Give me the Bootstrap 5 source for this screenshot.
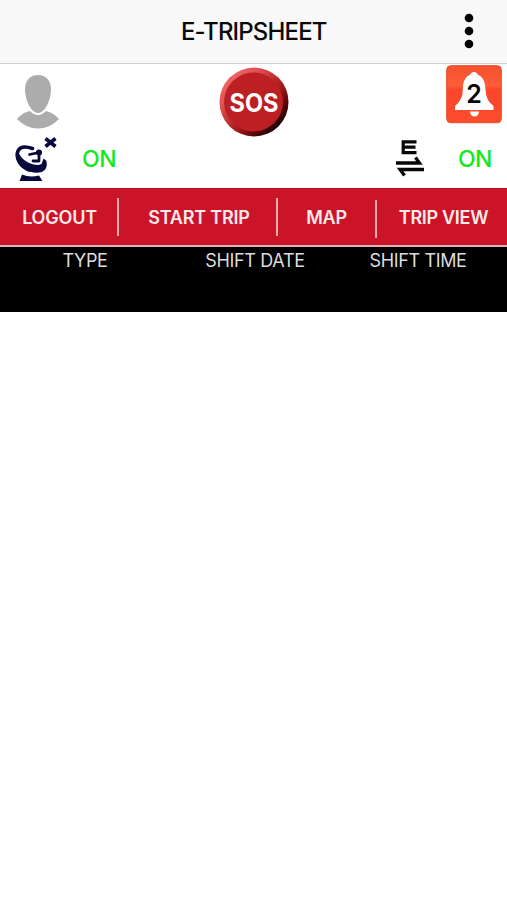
<!DOCTYPE html>
<html lang="en">
<head>
<meta charset="utf-8">
<meta name="viewport" content="width=device-width, initial-scale=1">
<title>E-Tripsheet</title>
<link href="https://cdn.jsdelivr.net/npm/bootstrap@5.3.0/dist/css/bootstrap.min.css" rel="stylesheet">
<style>
body{font-family:Inter,"Liberation Sans",sans-serif;color:#0a0a0a;overflow-x:hidden}
svg{display:block;flex:none}
.topbar{height:64px;background:#f8f8f8;border-bottom:1px solid #cfcfcf;padding:0 32px 2px 0}
.title{font-size:24px;font-weight:500;letter-spacing:-.85px;line-height:1;margin:3px 0 0 181px}
.status-top{height:73px;padding:1px 5px 0 17px}
.sos{margin-left:2px}
.status-low{height:51px;padding:0 15px 0 15px}
.state-on{color:#12ea20;font-size:23px;font-weight:500;letter-spacing:-.5px;line-height:1;margin-top:11px}
.gap-sat{margin-left:24px}
.gap-swap{margin-right:32px}
.actions{height:59px;background:#cb1428;border-top:1px solid #b30f22;border-bottom:2px solid #d9b5b8}
.act{color:#ffe9ea;font-size:18px;font-weight:600;letter-spacing:-.2px;line-height:1;background:none;border:0;padding:2px 0 0}
.act-logout{width:117px;padding-left:2px}
.act-start{width:157px;padding-left:3px}
.act-map{width:97px}
.act-view{padding-right:1px;letter-spacing:-.3px}
.bar-line{width:2px;height:38px;background:#eda9b0}
.heads{height:65px;background:#000;color:#dcdcdc;font-size:18px;letter-spacing:-.35px;line-height:1;padding-top:5px}
.h-type{width:170px}.h-date{width:170px}.h-time{width:156px}
</style>
</head>
<body class="bg-white">
<header class="topbar d-flex align-items-center justify-content-between">
  <h1 class="title mb-0">E-TRIPSHEET</h1>
  <svg width="12" height="38" viewBox="0 0 12 38"><g fill="#000"><circle cx="6" cy="6" r="4.3"/><circle cx="6" cy="19" r="4.3"/><circle cx="6" cy="32" r="4.3"/></g></svg>
</header>
<main>
  <section class="status-top d-flex justify-content-between align-items-start">
    <svg width="43" height="65" viewBox="0 0 43 65"><g fill="#acacac"><path d="M21 10C13 10 8 16 8 24C8 35 14 48 21 48C28 48 34 35 34 24C34 16 29 10 21 10Z"/><path d="M0 54Q6 47 13 46Q17 50 21 50Q25 50 29 46Q37 48 42 54Q33 63.500 21 63.500Q9 63.500 0 54Z"/></g></svg>
    <svg class="sos" width="74" height="74" viewBox="0 0 74 74">
      <defs><linearGradient id="rim" x1=".12" y1=".12" x2=".87" y2=".87"><stop offset="0" stop-color="#ee6a6c"/><stop offset=".3" stop-color="#d8484b"/><stop offset=".6" stop-color="#a81c1e"/><stop offset=".82" stop-color="#5c0707"/><stop offset="1" stop-color="#100"/></linearGradient></defs>
      <circle cx="37" cy="37" r="34.500" fill="url(#rim)"/><circle cx="36.500" cy="37" r="29.500" fill="#bd2022"/>
      <text x="37" y="46.500" text-anchor="middle" textLength="49" lengthAdjust="spacingAndGlyphs" font-size="25" font-weight="700" fill="#fff">SOS</text>
    </svg>
    <svg width="56" height="59" viewBox="0 0 56 59">
      <defs><linearGradient id="tile" x1="0" y1="0" x2="0" y2="1"><stop offset="0" stop-color="#f4522f"/><stop offset=".35" stop-color="#ff5c3a"/><stop offset=".42" stop-color="#fb4729"/><stop offset="1" stop-color="#fc4b2d"/></linearGradient></defs>
      <rect x=".7" y=".7" width="54.600" height="57" rx="4" fill="url(#tile)" stroke="#e94929"/>
      <path d="M24.500 9.500Q25 7 28 7Q31 7 31.500 9.500Q38 12 39 20L40 29Q41 36 47.500 41V45H9V41Q15 36 16.500 29L17 20Q18 12 24.500 9.500Z" fill="#fff"/><path d="M24 46.500H33Q32.500 51.500 28.500 51.500Q24.500 51.500 24 46.500Z" fill="#fff"/>
      <text x="28" y="38" text-anchor="middle" font-size="25" font-weight="600" fill="#080808">2</text>
    </svg>
  </section>
  <section class="status-low d-flex align-items-start">
    <svg width="43" height="45" viewBox="0 0 43 45">
      <g fill="none" stroke="#08083d"><path d="M30.500 1.500L40.500 9.500M40.500 1.500L30.500 9.500" stroke-width="3.600"/><path d="M17.500 11.500Q6 7.500 3 14C0 22 6 30 14 33" stroke-width="3.600" stroke-linecap="round"/><path d="M14.500 17.500L24 15.500V23M18 24H24" stroke-width="2.800" stroke-linecap="round" stroke-linejoin="round"/></g>
      <path d="M2 13Q6 22 13 25.500Q21 29.500 26.500 27L28.500 21.500L31.500 24Q33 32 27 35Q18 37.500 9 31.500Q1 25 2 13Z" fill="#08083d"/><circle cx="24" cy="15.500" r="3" fill="#08083d"/><path d="M7 37.500Q15 41 24 38.500L27.500 44H4.500Z" fill="#08083d"/>
    </svg>
    <span class="state-on gap-sat">ON</span>
    <svg class="ms-auto gap-swap" width="32" height="42" viewBox="0 0 32 42">
      <path d="M22.500 4.800H9.200V15.600H22.500M9.200 10.200H21.500" fill="none" stroke="#080808" stroke-width="3.200"/>
      <path d="M2 26H25.500L21.500 20.500M30 32.500H6L10.500 38.500" fill="none" stroke="#080808" stroke-width="3.300"/>
    </svg>
    <span class="state-on">ON</span>
  </section>
  <nav class="actions d-flex align-items-center">
    <button class="act act-logout">LOGOUT</button><span class="bar-line"></span>
    <button class="act act-start">START TRIP</button><span class="bar-line"></span>
    <button class="act act-map">MAP</button><span class="bar-line mt-1"></span>
    <button class="act act-view flex-fill text-nowrap ps-1">TRIP VIEW</button>
  </nav>
  <div class="heads d-flex text-nowrap">
    <span class="h-type text-center">TYPE</span>
    <span class="h-date text-center">SHIFT DATE</span>
    <span class="h-time text-center">SHIFT TIME</span>
  </div>
</main>
<script src="https://cdn.jsdelivr.net/npm/bootstrap@5.3.0/dist/js/bootstrap.bundle.min.js"></script>
</body>
</html>
